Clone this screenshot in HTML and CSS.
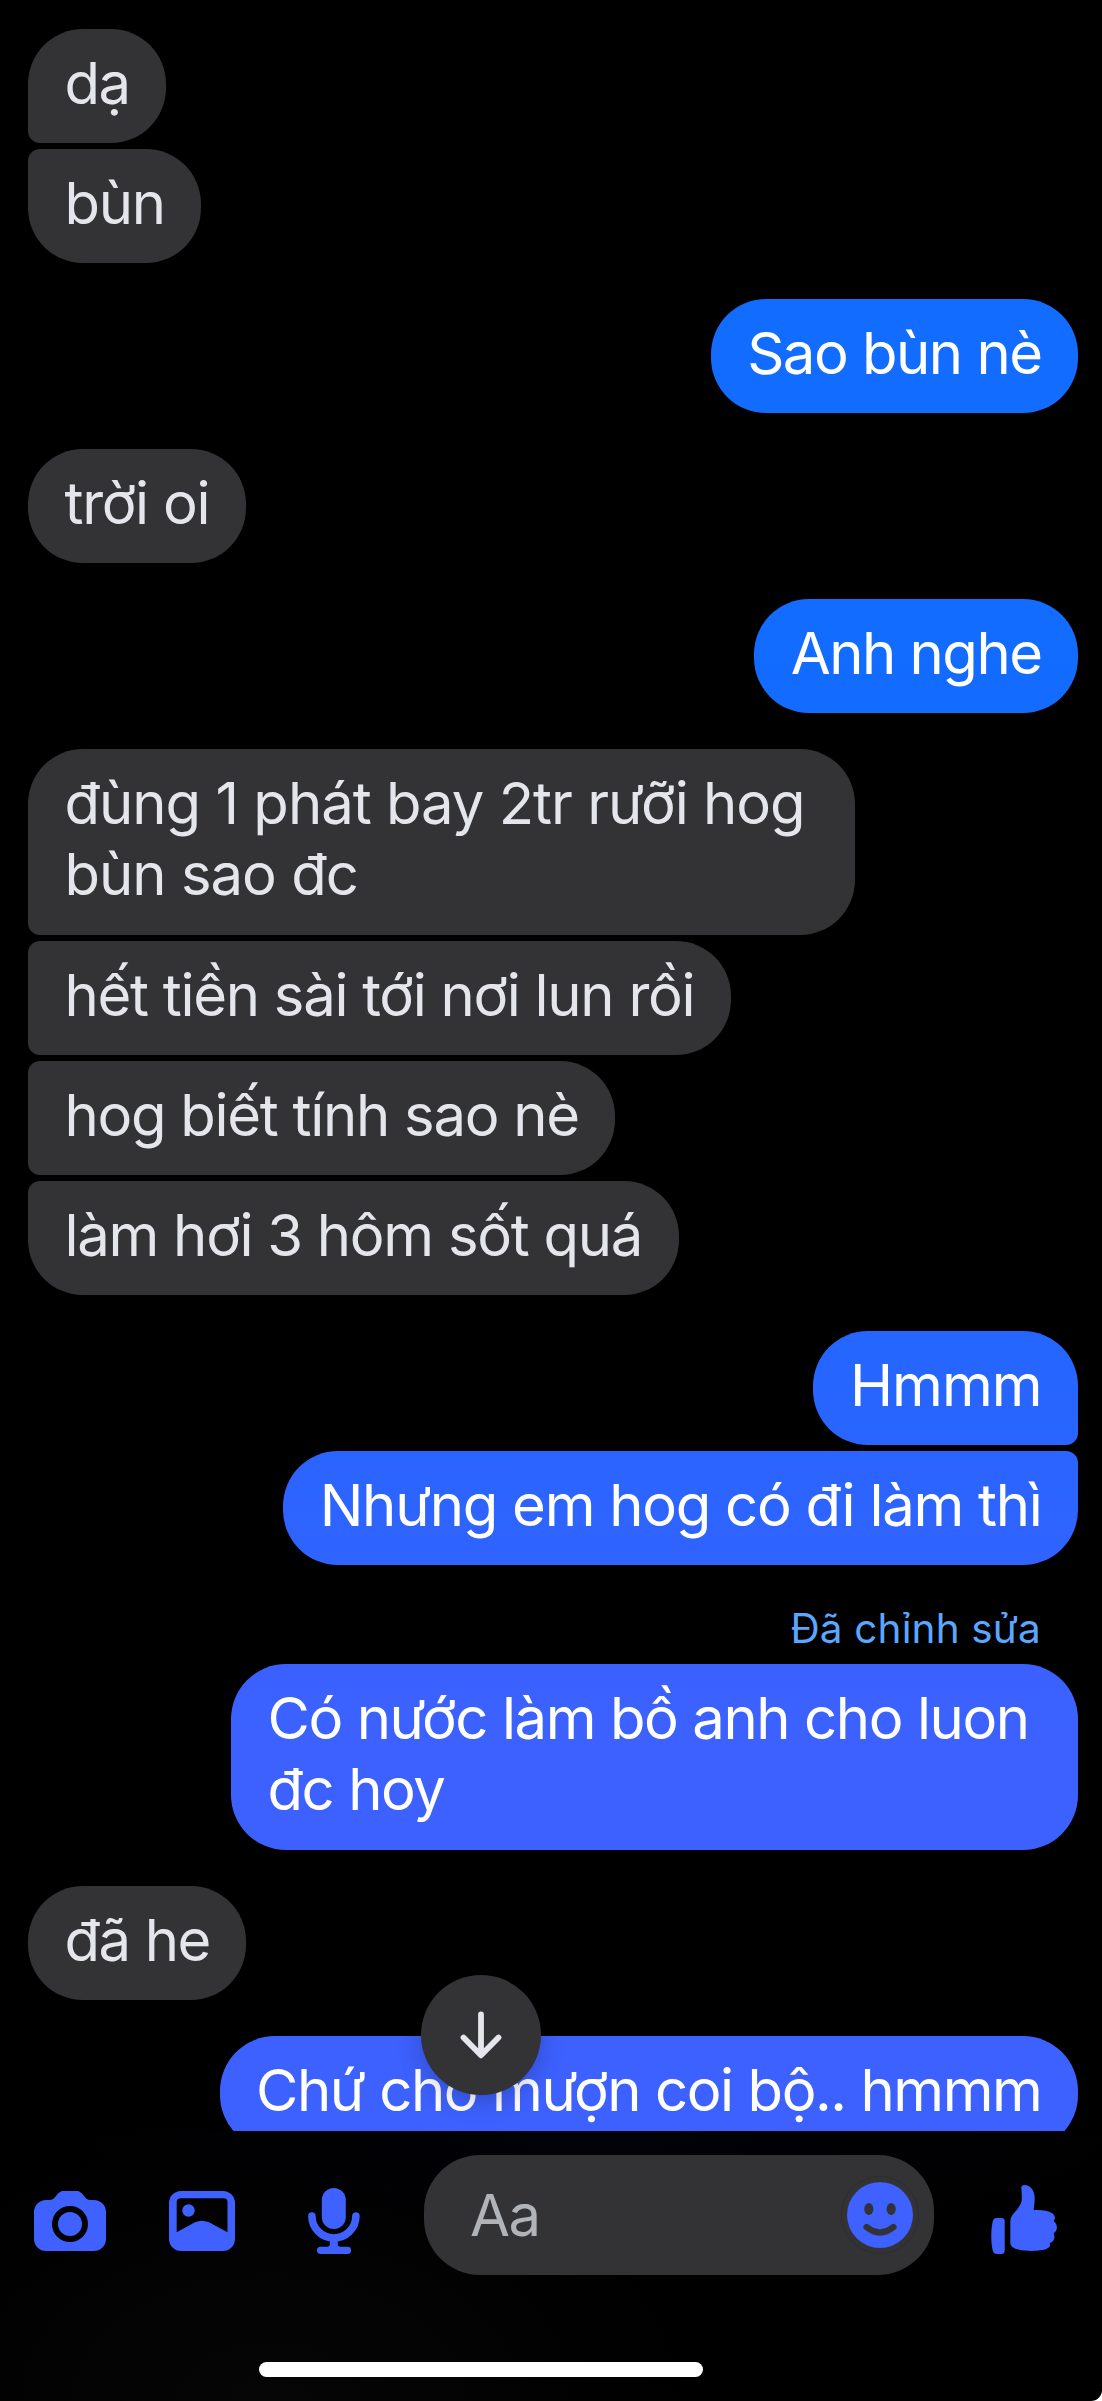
FILE: index.html
```html
<!DOCTYPE html>
<html lang="vi">
<head>
<meta charset="utf-8">
<title>Tin nhắn</title>
<link rel="stylesheet" href="styles.css">
</head>
<body>
<div class="app">
  <main class="thread">
    <section class="group received">
      <p class="bubble track-15">dạ</p>
      <p class="bubble">bùn</p>
    </section>
    <section class="group sent">
      <p class="bubble track-15">Sao bùn nè</p>
    </section>
    <section class="group received">
      <p class="bubble">trời oi</p>
    </section>
    <section class="group sent">
      <p class="bubble track-15">Anh nghe</p>
    </section>
    <section class="group received">
      <p class="bubble two-lines track-10">đùng 1 phát bay 2tr rưỡi hog bùn sao đc</p>
      <p class="bubble">hết tiền sài tới nơi lun rồi</p>
      <p class="bubble">hog biết tính sao nè</p>
      <p class="bubble">làm hơi 3 hôm sốt quá</p>
    </section>
    <section class="group sent">
      <p class="bubble track-10">Hmmm</p>
      <p class="bubble">Nhưng em hog có đi làm thì</p>
    </section>
    <section class="edited">
      <span class="edited-label">Đã chỉnh sửa</span>
      <div class="group sent">
        <p class="bubble two-lines track-14">Có nước làm bồ anh cho luon đc hoy</p>
      </div>
    </section>
    <section class="group received">
      <p class="bubble track-14">đã he</p>
    </section>
    <section class="group sent">
      <p class="bubble track-14">Chứ cho mượn coi bộ.. hmmm</p>
    </section>
    <button class="scroll-down" aria-label="Cuộn xuống">
      <svg width="120" height="120" viewBox="0 0 120 120" fill="none" stroke="#e4e6eb" stroke-width="5.8" stroke-linecap="round" stroke-linejoin="round"><path d="M60 39.5V80M42.500 62.500 60 80.300 77.500 62.500"/></svg>
    </button>
  </main>
  <footer class="footer">
    <div class="composer">
      <svg class="icon camera" width="72" height="60" viewBox="0 0 72 60"><path d="M12 9h3c3.500 0 5-1.500 7-4 2.300-3 4-5 8-5h12c4 0 5.700 2 8 5 2 2.500 3.500 4 7 4h3a12 12 0 0 1 12 12v27a12 12 0 0 1-12 12H12A12 12 0 0 1 0 48V21A12 12 0 0 1 12 9ZM36 15a18 18 0 1 0 0 36 18 18 0 0 0 0-36Z" fill-rule="evenodd"/><circle cx="36" cy="33" r="12"/></svg>
      <svg class="icon picture" width="66" height="60" viewBox="0 0 66 60"><path d="M12 0h42a12 12 0 0 1 12 12v36a12 12 0 0 1-12 12H12A12 12 0 0 1 0 48V12A12 12 0 0 1 12 0ZM11.500 7.300Q7.700 7.300 7.700 11V41.300L26 31.200Q33 28.200 40 31.200L58.500 41.300V11Q58.500 7.300 54.500 7.300Z" fill-rule="evenodd"/><circle cx="19.500" cy="19.500" r="6.200"/></svg>
      <svg class="icon mic" width="52" height="66" viewBox="0 0 52 66"><rect x="13.800" width="24" height="41" rx="12"/><path d="M3.900 28a22 22 0 0 0 44 0" fill="none" stroke="#3e61ff" stroke-width="7.600" stroke-linecap="round"/><path d="M21.800 52.500h8v3.500q0 2.700 2.700 2.700H39.500a3.600 3.600 0 0 1 0 7.300H12.600a3.600 3.600 0 0 1 0-7.300h6.500q2.700 0 2.700-2.700Z"/></svg>
      <div class="field">
        <span>Aa</span>
        <svg class="icon" width="80" height="80" viewBox="0 0 80 80"><circle cx="40" cy="40" r="38.600" fill="none" stroke="#29292b" stroke-width=".7"/><circle cx="40" cy="40" r="33"/><ellipse cx="28.800" cy="34" rx="4.600" ry="6.100" fill="#333335"/><ellipse cx="51.200" cy="34" rx="4.600" ry="6.100" fill="#333335"/><path d="M26.600 52Q40 62.800 53.400 52" fill="none" stroke="#333335" stroke-width="6.300" stroke-linecap="round"/></svg>
      </div>
      <svg class="icon like" width="66" height="69" viewBox="0 0 66 69"><path d="M5 33h5.500Q13.700 33 13.700 36.200V65.500Q13.700 69 10.500 69H6C2.500 69 1.800 66 1.200 63 0 56 0 46 1.200 39 1.800 35 2.800 33 5 33Z"/><path d="M30.300 3Q30.200 0 33.500 0C39.500 0 43.700 5.500 43.700 13.500 43.700 18 43 21.500 42.700 25 48 25 52.500 25.200 56.500 26.200 63.500 28 65.500 32 62.700 36.200 67 39.500 67 45.500 62.600 48.300 64.500 52.500 63 57 58.700 58 60 62 57 63.900 51.500 65.100 44 66.400 34 66.200 27 64.500 21.500 63 19.300 61 19.300 57V38C19.300 34 20 32 22 29.300 24.500 26 29 21.500 30.200 17.500 31.300 14 30.700 8 30.300 3Z"/></svg>
    </div>
    <div class="home-bar"></div>
  </footer>
</div>
</body>
</html>
```
FILE: styles.css
```css
* { box-sizing: border-box; }

html { background: #fff; }

body {
  margin: 0;
  font-family: Inter, "Noto Sans", sans-serif;
  font-size: 58px;
  line-height: 71px;
}

.app {
  width: 1102px;
  height: 2401px;
  display: flex;
  flex-direction: column;
  background: #000;
  border-bottom-right-radius: 11px;
  overflow: hidden;
}

.thread {
  position: relative;
  flex: none;
  height: 2131px;
  padding: 29px 24px 0 28px;
  display: flex;
  flex-direction: column;
  gap: 36px;
  overflow: hidden;
}

.group {
  display: flex;
  flex-direction: column;
  align-items: flex-start;
  gap: 6px;
}

.group.sent { align-items: flex-end; }

.bubble {
  margin: 0;
  padding: 19px 36.5px 24px;
  border-radius: 55px;
  letter-spacing: -1.28px;
}

.track-10 { letter-spacing: -1px; }
.track-14 { letter-spacing: -1.42px; }
.track-15 { letter-spacing: -1.5px; }

.received .bubble {
  background: #333335;
  color: #e4e6eb;
}

.received .bubble:not(:first-child) { border-top-left-radius: 12px; }
.received .bubble:not(:last-child) { border-bottom-left-radius: 12px; }

.sent .bubble {
  background: linear-gradient(#116cff 0, #116cff 620px, #2466ff 1331px, #3063ff 1565px, #3a61ff 1664px, #3d61ff 1800px) fixed;
  color: #fff;
}

.sent .bubble:not(:first-child) { border-top-right-radius: 12px; }
.sent .bubble:not(:last-child) { border-bottom-right-radius: 12px; }

.two-lines { height: 186px; }
.received .two-lines { width: 827px; }
.sent .two-lines { width: 847px; }

.edited {
  display: flex;
  flex-direction: column;
  gap: 7px;
}

.edited-label {
  align-self: flex-end;
  margin-right: 37px;
  font-size: 40.5px;
  line-height: 56px;
  letter-spacing: 0.15px;
  color: #5aa7ff;
}

.scroll-down {
  position: absolute;
  left: 421px;
  top: 1975px;
  width: 120px;
  height: 120px;
  padding: 0;
  border: 0;
  border-radius: 50%;
  background: #333335;
  box-shadow: 0 6px 24px rgba(0, 0, 0, 0.22);
}

.scroll-down svg { display: block; }

.footer {
  flex: 1;
  display: flex;
  flex-direction: column;
  padding-top: 24px;
  background:
    radial-gradient(ellipse 420px 270px at 270px 100%, #060606, transparent),
    radial-gradient(ellipse 560px 110px at 600px 0, #020208, transparent);
}

.composer {
  display: flex;
  align-items: center;
  padding: 0 45px 0 34px;
}

.icon {
  display: block;
  flex: none;
  fill: #3e61ff;
}

.camera { margin-top: 12px; }
.picture { margin: 12px 0 0 63px; }
.mic { margin: 12px 0 0 73px; }
.like { margin: 9px 0 0 auto; }

.field {
  width: 510px;
  height: 120px;
  margin-left: 64px;
  padding: 0 14px 0 46px;
  display: flex;
  align-items: center;
  justify-content: space-between;
  border-radius: 56px;
  background: #333335;
  color: #b0b3b8;
  letter-spacing: -1.5px;
}

.home-bar {
  width: 444px;
  height: 15px;
  margin: 87px 0 0 259px;
  border-radius: 8px;
  background: #fff;
}
```
